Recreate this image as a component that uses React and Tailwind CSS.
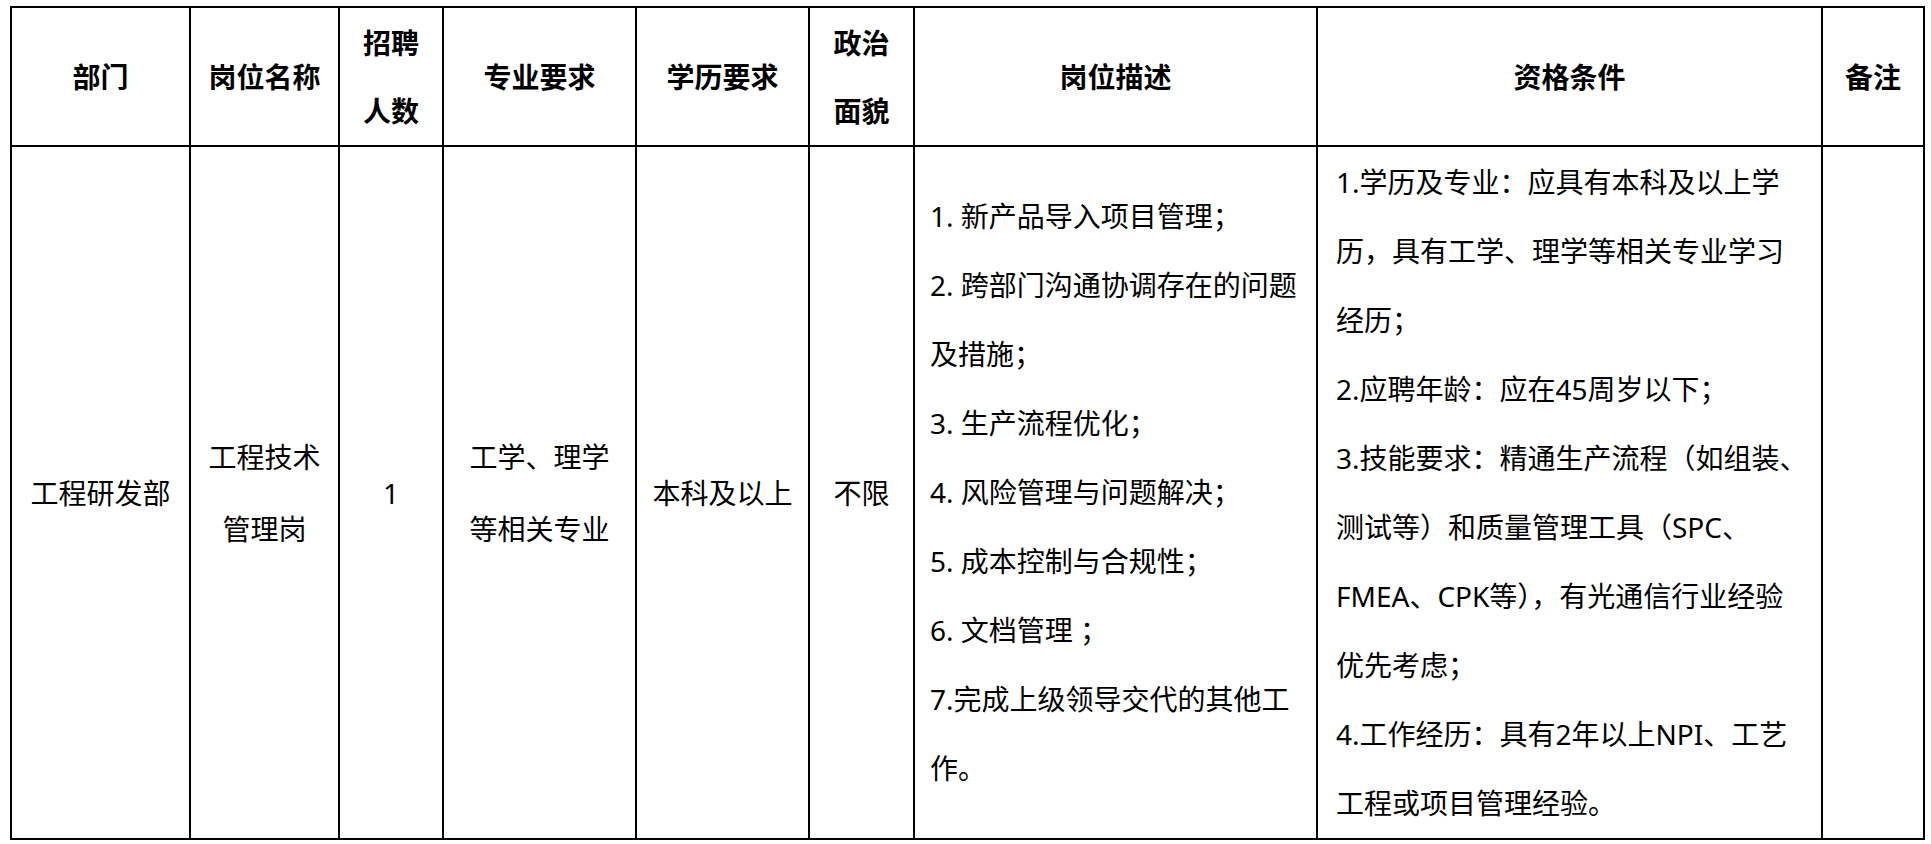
const cols = [179, 149, 104, 193, 173, 105, 403, 505, 102];

const duties = [
  '1. 新产品导入项目管理；',
  '2. 跨部门沟通协调存在的问题',
  '及措施；',
  '3. 生产流程优化；',
  '4. 风险管理与问题解决；',
  '5. 成本控制与合规性；',
  '6. 文档管理 ；',
  '7.完成上级领导交代的其他工',
  '作。',
];

const quals = [
  '1.学历及专业：应具有本科及以上学',
  '历，具有工学、理学等相关专业学习',
  '经历；',
  '2.应聘年龄：应在45周岁以下；',
  '3.技能要求：精通生产流程（如组装、',
  '测试等）和质量管理工具（SPC、',
  'FMEA、CPK等），有光通信行业经验',
  '优先考虑；',
  '4.工作经历：具有2年以上NPI、工艺',
  '工程或项目管理经验。',
];

function Lines({ items, className = '' }) {
  return (
    <div className={className}>
      {items.map((t, i) => (
        <div key={i} className="whitespace-nowrap">{t}</div>
      ))}
    </div>
  );
}

export default function App() {
  const th = 'border-2 border-black text-center align-middle p-0 font-bold';
  const td = 'border-2 border-black text-center align-middle p-0 font-normal';

  return (
    <div className="min-h-[844px] bg-white pt-[6px] pl-[10px] font-['Noto_Sans','Noto_Sans_CJK_SC',sans-serif] text-[28px] text-black">
      <table className="table-fixed border-collapse w-[1915px]">
        <colgroup>
          {cols.map((w, i) => (
            <col key={i} style={{ width: w }} />
          ))}
        </colgroup>
        <thead>
          <tr className="h-[139px]">
            <th className={th}>部门</th>
            <th className={th}>岗位名称</th>
            <th className={th}>
              <Lines items={['招聘', '人数']} className="leading-[68px]" />
            </th>
            <th className={th}>专业要求</th>
            <th className={th}>学历要求</th>
            <th className={th}>
              <Lines items={['政治', '面貌']} className="leading-[68px]" />
            </th>
            <th className={th}>岗位描述</th>
            <th className={th}>资格条件</th>
            <th className={th}>备注</th>
          </tr>
        </thead>
        <tbody>
          <tr className="h-[693px]">
            <td className={td}>工程研发部</td>
            <td className={td}>
              <Lines items={['工程技术', '管理岗']} className="leading-[72px]" />
            </td>
            <td className={td}>1</td>
            <td className={td}>
              <Lines items={['工学、理学', '等相关专业']} className="leading-[72px]" />
            </td>
            <td className={td}>本科及以上</td>
            <td className={td}>不限</td>
            <td className={`${td} text-left pl-[15px]`}>
              <Lines items={duties} className="leading-[69px]" />
            </td>
            <td className={`${td} text-left pl-[18px]`}>
              <Lines items={quals} className="leading-[69px]" />
            </td>
            <td className={td}></td>
          </tr>
        </tbody>
      </table>
    </div>
  );
}
